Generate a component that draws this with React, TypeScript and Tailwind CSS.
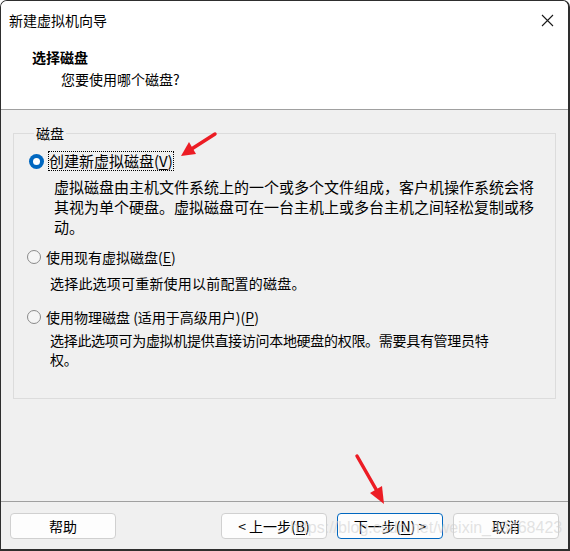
import React from 'react';

const font = { fontFamily: '"Noto Sans CJK SC", "Noto Sans", sans-serif' };

function Radio({ checked, size }: { checked?: boolean; size: string }) {
    if (checked) {
        return (
            <span className={`${size} shrink-0 rounded-full bg-[#0067c0] flex items-center justify-center`}>
                <span className="w-[7px] h-[7px] rounded-full bg-white" />
            </span>
        );
    }
    return <span className={`${size} shrink-0 rounded-full border border-[#8a8a8a] bg-[#f5f5f5]`} />;
}

function Btn({ children, primary }: { children: React.ReactNode; primary?: boolean }) {
    return (
        <button
            className={`w-[106px] h-[26px] rounded-[4px] bg-[#fdfdfd] text-[14px] text-black flex items-center justify-center border ${
                primary ? 'border-[#0067c0]' : 'border-[#d0d0d0]'
            }`}
        >
            {children}
        </button>
    );
}

export default function App() {
    return (
        <div className="w-[570px] h-[551px] bg-white" style={font}>
            <div className="relative w-[570px] h-[551px] flex flex-col bg-[#f0f0f0] border-l border-t border-r-2 border-b-2 border-[#2e2e2e] rounded-t-[7px] overflow-hidden text-black">
                {/* Title bar */}
                <div className="h-[37px] bg-white flex items-center justify-between pl-[8px] pr-[14px]">
                    <span className="text-[14px] leading-[20px] pt-[1px]">新建虚拟机向导</span>
                    <svg width="13" height="13" viewBox="0 0 13 13" className="mt-[1px]">
                        <path d="M1 1 L12 12 M12 1 L1 12" stroke="#1a1a1a" strokeWidth="1.1" />
                    </svg>
                </div>

                {/* Header */}
                <div className="h-[72px] bg-white pl-[31px] pt-[9px] border-b border-[#a0a0a0]">
                    <div className="text-[14px] leading-[20px] font-bold">选择磁盘</div>
                    <div className="text-[14px] leading-[20px] mt-[2px] pl-[29px]">您要使用哪个磁盘?</div>
                </div>

                {/* Content */}
                <div className="flex-1 px-[12px] pt-[13px]">
                    <fieldset className="h-[276px] border border-[#dcdcdc] pl-[13px]">
                        <legend className="ml-[7px] px-[2px] text-[14px] leading-[20px]">磁盘</legend>

                        <div className="ml-[2px] mt-[8px]">
                            <div className="flex items-center h-[20px]">
                                <Radio checked size="w-[15px] h-[15px]" />
                                <span className="ml-[4px] border border-dotted border-black px-[0px] text-[15px] leading-[18px]">
                                    创建新虚拟磁盘(<span className="underline underline-offset-2">V</span>)
                                </span>
                            </div>
                            <p className="mt-[6px] pl-[25px] text-[15px] leading-[20px] w-[508px]">
                                虚拟磁盘由主机文件系统上的一个或多个文件组成，客户机操作系统会将其视为单个硬盘。虚拟磁盘可在一台主机上或多台主机之间轻松复制或移动。
                            </p>
                        </div>

                        <div className="mt-[10px]">
                            <div className="flex items-center h-[20px]">
                                <Radio size="w-[14px] h-[14px]" />
                                <span className="ml-[5px] text-[14px] leading-[20px]">
                                    使用现有虚拟磁盘(<span className="underline underline-offset-2">E</span>)
                                </span>
                            </div>
                            <p className="mt-[6px] pl-[23px] text-[14px] leading-[20px] tracking-[0.2px]">
                                选择此选项可重新使用以前配置的磁盘。
                            </p>
                        </div>

                        <div className="mt-[14px]">
                            <div className="flex items-center h-[20px]">
                                <Radio size="w-[14px] h-[14px]" />
                                <span className="ml-[5px] text-[14px] leading-[20px]">
                                    使用物理磁盘 (适用于高级用户)(<span className="underline underline-offset-2">P</span>)
                                </span>
                            </div>
                            <p className="mt-[4px] pl-[23px] text-[14px] leading-[19px] tracking-[-0.3px] w-[470px]">
                                选择此选项可为虚拟机提供直接访问本地硬盘的权限。需要具有管理员特权。
                            </p>
                        </div>
                    </fieldset>
                </div>

                {/* Footer */}
                <div className="h-[48px] border-t border-[#a0a0a0] flex items-start pt-[11px] pl-[9px] pr-[9px]">
                    <Btn>帮助</Btn>
                    <div className="ml-auto flex gap-[10px]">
                        <Btn>
                            &lt; 上一步(<span className="underline underline-offset-2">B</span>)
                        </Btn>
                        <Btn primary>
                            下一步(<span className="underline underline-offset-2">N</span>) &gt;
                        </Btn>
                        <Btn>取消</Btn>
                    </div>
                </div>

                {/* watermark */}
                <div
                    className="absolute left-[289px] top-[515px] text-[16px] leading-[24px] text-[#d0d0d0]/60 pointer-events-none whitespace-nowrap"
                    style={{ fontFamily: '"Liberation Sans", Arial, sans-serif' }}
                >
                    https://blog.csdn.net/weixin_43468423
                </div>

                {/* red arrows */}
                <svg className="absolute left-[-1px] top-[-1px] pointer-events-none" width="570" height="551">
                    <line x1="215" y1="134" x2="190" y2="150" stroke="#ec1c24" strokeWidth="3.5" strokeLinecap="round" />
                    <polygon points="181,156 196,154 189,142" fill="#ec1c24" />
                    <line x1="357" y1="456" x2="377" y2="491" stroke="#ec1c24" strokeWidth="3.5" strokeLinecap="round" />
                    <polygon points="384,504 382,486 370,493" fill="#ec1c24" />
                </svg>
            </div>
        </div>
    );
}
